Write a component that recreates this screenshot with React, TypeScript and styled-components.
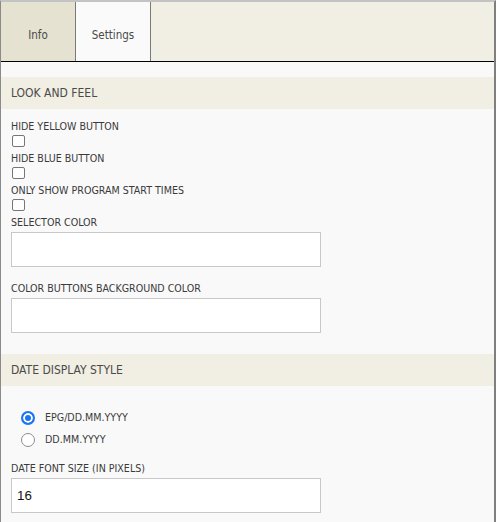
import React from "react";
import styled, { createGlobalStyle } from "styled-components";

const GlobalStyle = createGlobalStyle`
  html, body {
    margin: 0;
    padding: 0;
    background: #ffffff;
  }
  * {
    box-sizing: border-box;
  }
`;

const uiFont = `"DejaVu Sans Condensed", "DejaVu Sans", sans-serif`;

const Frame = styled.div`
  width: 496px;
  min-height: 522px;
  background: #f9f9f9;
  border-top: 2px solid #c3c3c3;
  border-left: 1px solid #8a8a8a;
  border-right: 2px solid #7f7f7f;
  font-family: ${uiFont};
  font-stretch: condensed;
`;

const TabBar = styled.div`
  display: flex;
  height: 60px;
  background: #f1eee3;
  border-bottom: 1px solid #000;
`;

const Tab = styled.div<{ $active?: boolean; $shaded?: boolean }>`
  width: 75px;
  display: flex;
  align-items: center;
  justify-content: center;
  border-right: 1px solid #7a7a7a;
  background: ${({ $active, $shaded }) =>
    $active ? "#fafafa" : $shaded ? "#e6e2d1" : "#f1eee3"};
  color: #4a4a4a;
  font-size: 11.5px;
  padding-top: 7px;
  cursor: pointer;
`;

const Content = styled.div`
  padding-top: 15px;
`;

const SectionHeader = styled.div`
  height: 32px;
  display: flex;
  align-items: center;
  padding-left: 10px;
  background: #f1eee3;
  color: #4a4a4a;
  font-size: 12px;
  text-transform: uppercase;
`;

const Section = styled.div<{ $top: number; $bottom: number }>`
  display: flex;
  flex-direction: column;
  align-items: flex-start;
  padding: ${({ $top, $bottom }) => `${$top}px 10px ${$bottom}px`};
`;

const FieldLabel = styled.label<{ $gap?: number }>`
  display: block;
  font-size: 10.6px;
  line-height: 13px;
  color: #3a3a3a;
  text-transform: uppercase;
  margin-top: ${({ $gap }) => $gap ?? 0}px;
`;

const Checkbox = styled.input.attrs({ type: "checkbox" })`
  appearance: none;
  width: 13px;
  height: 12px;
  margin: 2px 0 5px 1px;
  border: 1px solid #767676;
  border-radius: 2px;
  background: #fff;
`;

const TextField = styled.input.attrs({ type: "text" })`
  width: 310px;
  height: 35px;
  margin: 3px 0 0;
  padding: 0 5px;
  border: 1px solid #c8c8c8;
  border-radius: 0;
  background: #fff;
  font-family: "Liberation Sans", Arial, sans-serif;
  font-size: 13.33px;
  color: #111;
  outline: none;
`;

const RadioGroup = styled.div`
  display: flex;
  flex-direction: column;
  gap: 8px;
  padding-left: 10px;
  margin-bottom: 15px;
`;

const RadioRow = styled.label`
  display: flex;
  align-items: center;
  gap: 10px;
  height: 14px;
`;

const Radio = styled.input.attrs({ type: "radio" })`
  appearance: none;
  width: 14px;
  height: 14px;
  margin: 0;
  border-radius: 50%;
  border: 1.5px solid #8e8e93;
  background: #fff;
  &:checked {
    border: 2px solid #1b74f5;
    background: #1b74f5;
    box-shadow: inset 0 0 0 2px #fff;
  }
`;

const RadioText = styled.span`
  font-size: 10.6px;
  color: #3a3a3a;
  padding-bottom: 3px;
`;

const checkOptions = [
  "Hide yellow button",
  "Hide blue button",
  "Only show program start times",
];

export default function App() {
  return (
    <>
      <GlobalStyle />
      <Frame>
        <TabBar>
          <Tab $shaded>Info</Tab>
          <Tab $active>Settings</Tab>
        </TabBar>
        <Content>
          <SectionHeader>Look and feel</SectionHeader>
          <Section $top={11} $bottom={21}>
            {checkOptions.map((o) => (
              <React.Fragment key={o}>
                <FieldLabel>{o}</FieldLabel>
                <Checkbox />
              </React.Fragment>
            ))}
            <FieldLabel>Selector color</FieldLabel>
            <TextField />
            <FieldLabel $gap={15}>Color buttons background color</FieldLabel>
            <TextField />
          </Section>
          <SectionHeader>Date display style</SectionHeader>
          <Section $top={25} $bottom={8}>
            <RadioGroup>
              <RadioRow>
                <Radio name="datestyle" defaultChecked />
                <RadioText>EPG/DD.MM.YYYY</RadioText>
              </RadioRow>
              <RadioRow>
                <Radio name="datestyle" />
                <RadioText>DD.MM.YYYY</RadioText>
              </RadioRow>
            </RadioGroup>
            <FieldLabel>Date font size (in pixels)</FieldLabel>
            <TextField defaultValue="16" />
          </Section>
        </Content>
      </Frame>
    </>
  );
}
